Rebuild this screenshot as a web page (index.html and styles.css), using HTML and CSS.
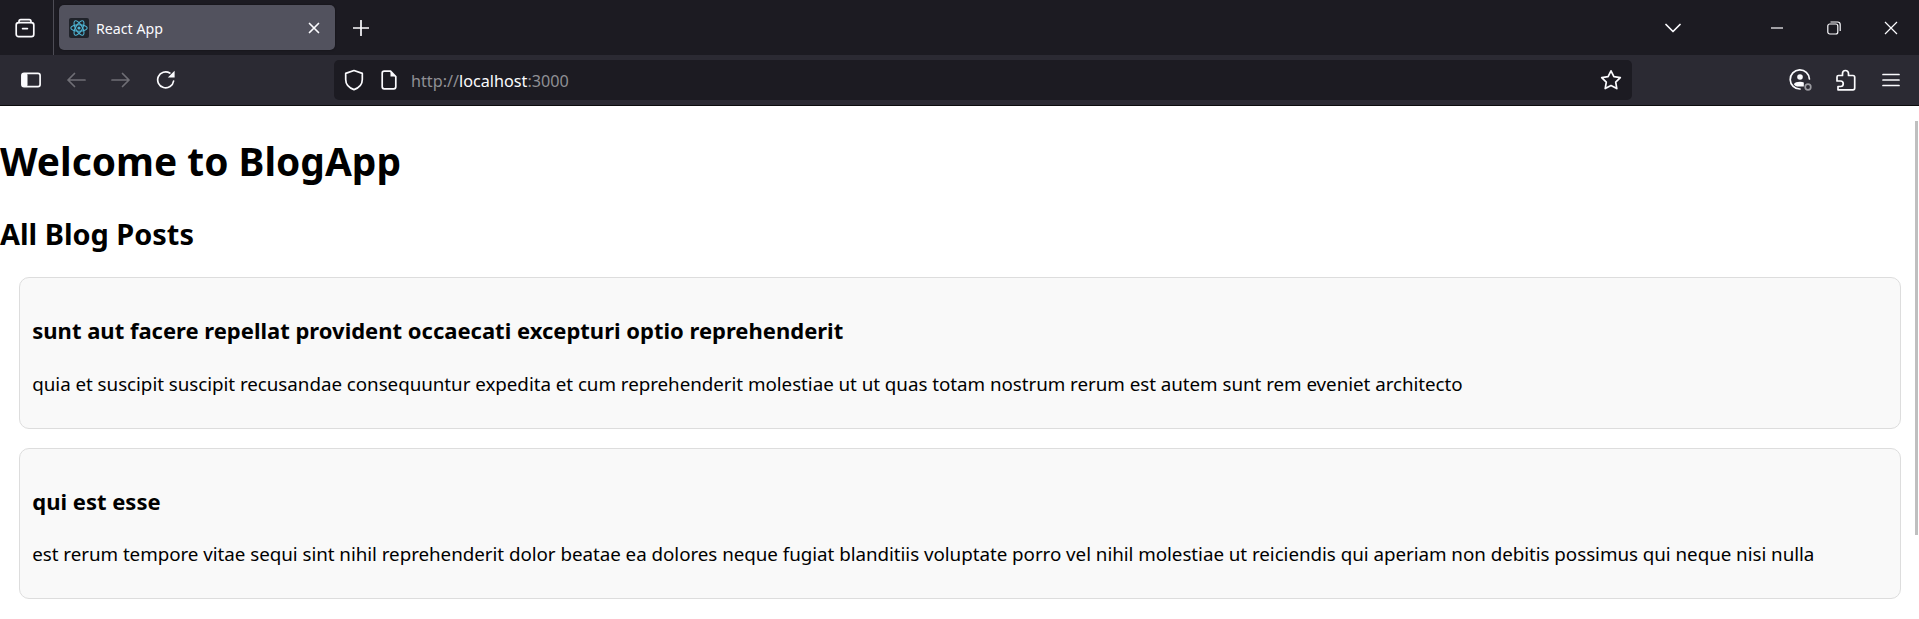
FILE: index.html
```html
<!DOCTYPE html>
<html lang="en">
<head>
    <meta charset="UTF-8">
    <title>React App</title>
    <link rel="stylesheet" href="styles.css">
</head>
<body>
    <header class="browser">
        <div class="tabbar">
            <div class="view-btn">
                <svg width="22" height="22" viewBox="0 0 22 22" class="icon"><path d="M5 5.5V4.5Q5 2.7 6.8 2.7H15.2Q17 2.7 17 4.5V5.5"/><rect x="2.2" y="5.6" width="17.6" height="14" rx="2.4"/><path d="M8.6 11.6H13.4"/></svg>
            </div>
            <div class="tab">
                <span class="favicon">
                    <svg width="20" height="20" viewBox="0 0 20 20" fill="none" stroke="#4fb6d6" stroke-width="1.1"><ellipse cx="10" cy="10" rx="8.2" ry="3.3"/><ellipse cx="10" cy="10" rx="8.2" ry="3.3" transform="rotate(60 10 10)"/><ellipse cx="10" cy="10" rx="8.2" ry="3.3" transform="rotate(120 10 10)"/><circle cx="10" cy="10" r="1.6" fill="#4fb6d6" stroke="none"/></svg>
                </span>
                <span class="tab-title">React App</span>
                <svg width="12" height="12" viewBox="0 0 12 12" class="icon tab-close"><path d="M1.5 1.5L10.5 10.5M10.5 1.5L1.5 10.5"/></svg>
            </div>
            <div class="new-tab">
                <svg width="16" height="16" viewBox="0 0 16 16" class="icon"><path d="M8 .5V15.5M.5 8H15.5"/></svg>
            </div>
            <div class="spacer"></div>
            <div class="tab-list">
                <svg width="16" height="10" viewBox="0 0 16 10" class="icon"><path d="M1 1.5L8 8.5L15 1.5"/></svg>
            </div>
            <div class="win-btn">
                <svg width="14" height="14" viewBox="0 0 14 14" class="thin"><path d="M1 7H13"/></svg>
            </div>
            <div class="win-btn">
                <svg width="14" height="14" viewBox="0 0 14 14" class="thin"><rect x=".8" y="3" width="10" height="10" rx="2"/><path d="M3.5 1H10.5Q13.2 1 13.2 3.7V10"/></svg>
            </div>
            <div class="win-btn">
                <svg width="14" height="14" viewBox="0 0 14 14" class="thin"><path d="M1 1L13 13M13 1L1 13"/></svg>
            </div>
        </div>
        <div class="toolbar">
            <div class="tool-btn">
                <svg width="20" height="16" viewBox="0 0 20 16" class="icon"><rect x=".9" y="1.4" width="18.2" height="13.2" rx="2.2"/><rect x="1" y="1.5" width="5.5" height="13" rx="1.5" class="solid"/></svg>
            </div>
            <div class="tool-btn">
                <svg width="20" height="16" viewBox="0 0 20 16" class="icon dim"><path d="M19 8H2M8.5 1.5L2 8L8.5 14.5"/></svg>
            </div>
            <div class="tool-btn">
                <svg width="20" height="16" viewBox="0 0 20 16" class="icon dim"><path d="M1 8H18M11.5 1.5L18 8L11.5 14.5"/></svg>
            </div>
            <div class="tool-btn">
                <svg width="20" height="20" viewBox="0 0 20 20" class="icon"><path d="M17.6 11A8 8 0 1 1 13.8 3"/><path d="M18.6 .8V7.6H11.8Z" class="solid"/></svg>
            </div>
            <div class="urlbar">
                <svg width="20" height="22" viewBox="0 0 20 22" class="icon url-shield"><path d="M10 1.5L18.3 4.4V10.5C18.3 15.5 14.5 19 10 20.6C5.5 19 1.7 15.5 1.7 10.5V4.4Z"/></svg>
                <svg width="16" height="20" viewBox="0 0 16 20" class="icon url-page"><path d="M9.5 1.2H3.2Q1.2 1.2 1.2 3.2V16.8Q1.2 18.8 3.2 18.8H12.8Q14.8 18.8 14.8 16.8V6.5Z"/><path d="M9.5 1.2V6.5H14.8Z" class="solid"/></svg>
                <span class="url"><span class="url-dim">http://</span>localhost<span class="url-dim">:3000</span></span>
                <div class="spacer"></div>
                <svg width="22" height="22" viewBox="0 0 22 22" class="icon"><path d="M11 1.8L13.9 7.7L20.3 8.6L15.7 13.1L16.8 19.6L11 16.5L5.2 19.6L6.3 13.1L1.7 8.6L8.1 7.7Z"/></svg>
            </div>
            <div class="spacer"></div>
            <div class="tool-btn">
                <svg width="24" height="24" viewBox="0 0 24 24" class="icon"><path d="M20.4 11A9.6 9.6 0 1 0 11 21"/><circle cx="11" cy="9" r="2.8" class="solid"/><path d="M4.8 16.2Q6.5 13.8 11 13.8Q13.5 13.8 14.8 14.6V18.4H8Q6 18 4.8 16.2Z" class="solid"/><circle cx="19" cy="19" r="2.8" class="account-dot"/></svg>
            </div>
            <div class="tool-btn">
                <svg width="20" height="22" viewBox="0 0 20 22" class="icon"><path d="M6.5 6.5V4.5A3 3 0 0 1 12.5 4.5V6.5H17Q18.7 6.5 18.7 8.2V19Q18.7 20.8 17 20.8H2V17.5H4.5A2.7 2.7 0 0 0 4.5 12H1V8Q1 6.5 2.5 6.5Z"/></svg>
            </div>
            <div class="tool-btn">
                <svg width="18" height="14" viewBox="0 0 18 14" class="icon"><path d="M1 1.5H17M1 7H17M1 12.5H17"/></svg>
            </div>
        </div>
    </header>
    <main class="page">
        <h1>Welcome to BlogApp</h1>
        <h2>All Blog Posts</h2>
        <div class="post">
            <h3>sunt aut facere repellat provident occaecati excepturi optio reprehenderit</h3>
            <p>quia et suscipit suscipit recusandae consequuntur expedita et cum reprehenderit molestiae ut ut quas totam nostrum rerum est autem sunt rem eveniet architecto</p>
        </div>
        <div class="post">
            <h3>qui est esse</h3>
            <p>est rerum tempore vitae sequi sint nihil reprehenderit dolor beatae ea dolores neque fugiat blanditiis voluptate porro vel nihil molestiae ut reiciendis qui aperiam non debitis possimus qui neque nisi nulla</p>
        </div>
        <div class="scroll-thumb"></div>
    </main>
</body>
</html>
```
FILE: styles.css
```css
html, body {
    margin: 0;
    height: 619px;
    overflow: hidden;
}

body {
    font-family: "Noto Sans", "Open Sans", sans-serif;
    background: white;
    color: black;
}

.spacer {
    flex: 1;
}

.icon {
    fill: none;
    stroke: #fbfbfe;
    stroke-width: 1.7;
    stroke-linecap: round;
    stroke-linejoin: round;
    display: block;
}

.icon.dim {
    stroke: #6f6e75;
}

.icon .solid {
    fill: #fbfbfe;
    stroke: none;
}

.icon .account-dot {
    stroke: #9a9aa0;
    fill: #2b2a33;
}

.thin {
    fill: none;
    stroke: #fbfbfe;
    stroke-width: 1.2;
    display: block;
}

.tabbar {
    display: flex;
    align-items: center;
    height: 55px;
    background: #1c1b22;
}

.view-btn {
    display: flex;
    align-items: center;
    justify-content: center;
    width: 50px;
    height: 55px;
    padding-right: 3px;
    border-right: 1px solid #4d4c55;
}

.tab {
    display: flex;
    align-items: center;
    width: 276px;
    height: 45px;
    margin-left: 5px;
    padding: 0 10px;
    box-sizing: border-box;
    background: #52525e;
    border-radius: 5px;
    box-shadow: 0 0 2px rgba(0, 0, 0, 0.5);
}

.favicon {
    display: flex;
    align-items: center;
    justify-content: center;
    width: 20px;
    height: 20px;
    background: #20232a;
    border-radius: 2px;
}

.tab-title {
    flex: 1;
    margin-left: 7px;
    padding-top: 2px;
    font-size: 14.2px;
    color: #fbfbfe;
}

.tab-close {
    margin-right: 5px;
}

.new-tab {
    display: flex;
    justify-content: center;
    width: 50px;
    margin-left: 1px;
}

.tab-list {
    display: flex;
    justify-content: center;
    width: 56px;
    margin-right: 47px;
}

.win-btn {
    display: flex;
    justify-content: center;
    width: 57px;
}

.toolbar {
    display: flex;
    align-items: center;
    height: 50px;
    padding: 0 6px 0 8px;
    background: #2b2a33;
    border-bottom: 1px solid #0c0c0d;
}

.tool-btn {
    display: flex;
    align-items: center;
    justify-content: center;
    width: 45px;
    height: 40px;
}

.urlbar {
    display: flex;
    align-items: center;
    width: 1298px;
    height: 40px;
    margin-left: 146px;
    padding: 0 10px;
    box-sizing: border-box;
    background: #1c1b22;
    border-radius: 5px;
}

.url-page {
    margin-left: 17px;
}

.url {
    margin-left: 14px;
    padding-top: 2px;
    font-size: 16.2px;
    color: #fbfbfe;
}

.url-dim {
    color: #8f8f94;
}

.page {
    position: relative;
    height: 513px;
    overflow: hidden;
}

h1 {
    margin: 28.3px 0 25.3px;
    font-size: 38.9px;
    line-height: 53px;
}

h2 {
    margin: 26.4px 0 23.4px;
    font-size: 28.9px;
    line-height: 40px;
}

.post {
    margin: 0 18px 18.75px 18.75px;
    padding: 12.5px;
    background: #f9f9f9;
    border: 1.25px solid #ddd;
    border-radius: 10px;
}

h3 {
    margin: 24.6px 0;
    font-size: 22px;
    line-height: 31px;
}

.post p {
    margin: 24.6px 0 17.6px;
    font-size: 18.8px;
    line-height: 27px;
    letter-spacing: -0.04px;
}

.scroll-thumb {
    position: absolute;
    top: 15px;
    right: 1px;
    width: 3px;
    height: 414px;
    background: #bfbfbf;
}
```
